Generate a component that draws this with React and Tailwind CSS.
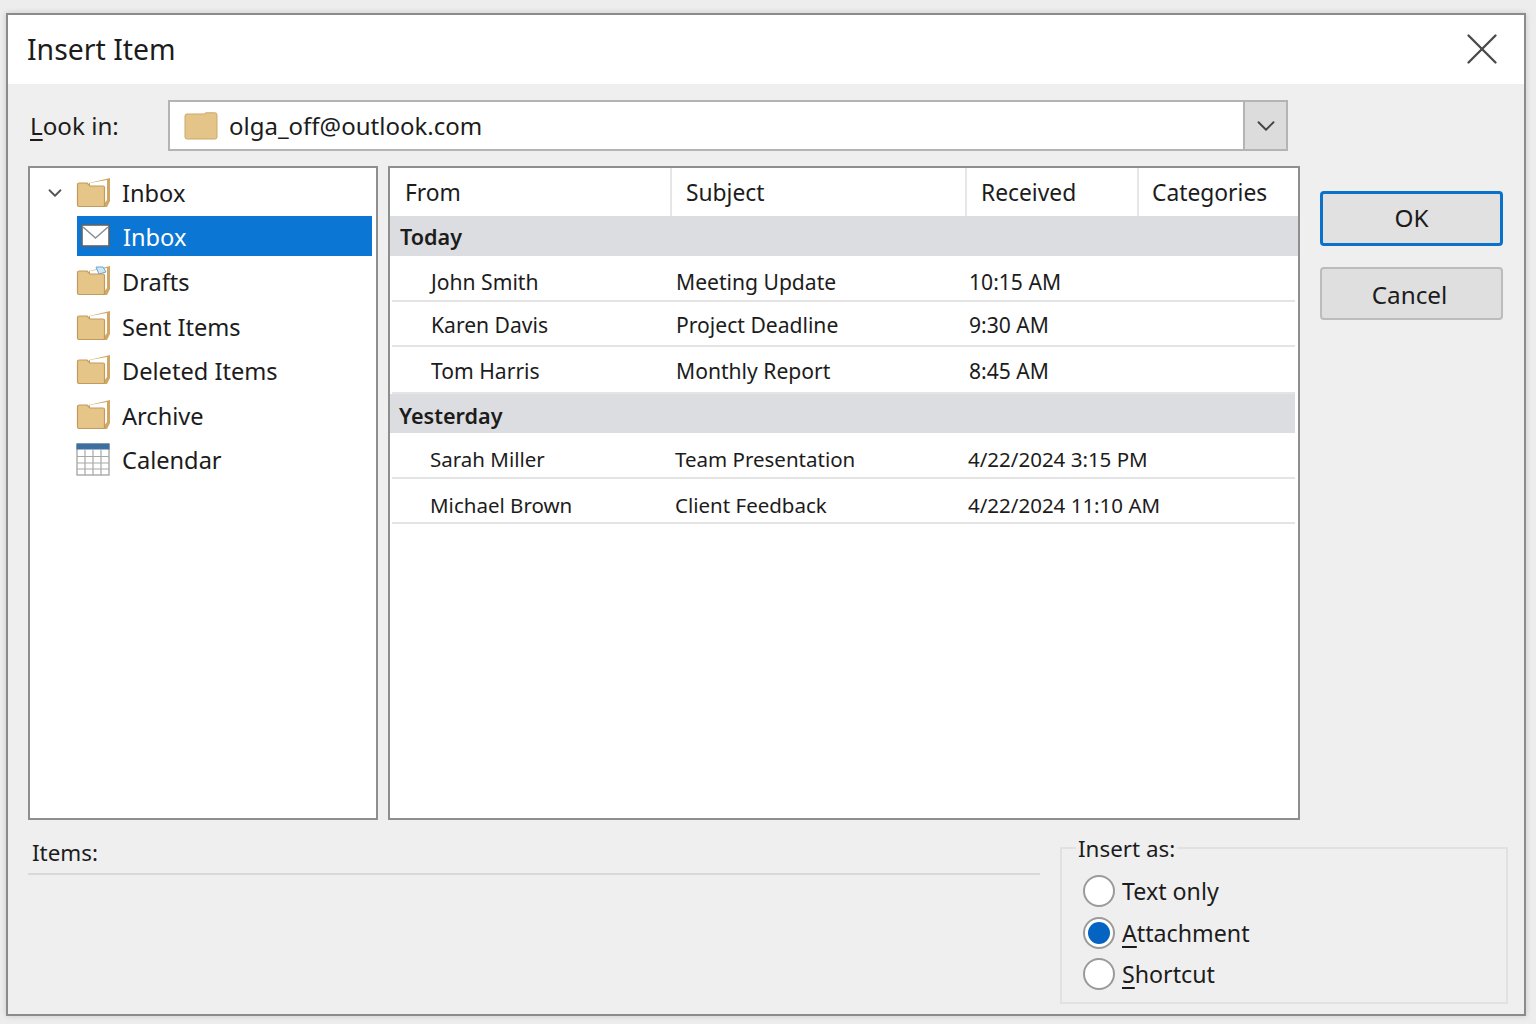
import React from "react";
import { X, ChevronDown } from "lucide-react";

const FolderIcon = ({ paper = true, note = false }) => (
  <svg width="36" height="32" viewBox="0 0 36 32" className="shrink-0">
    {paper && (
      <>
        <path d="M13 6 L34 1 V24 L31 30 H13 Z" fill="#cfa865" />
        <path d="M14 6 L31 3 V23 L28 27 H14 Z" fill="#ffffff" />
      </>
    )}
    {note && <path d="M20 2 L27 2 L30 7 L23 9 Z" fill="#cfe6f5" stroke="#6aa6d6" strokeWidth="1" />}
    <path
      d="M1.5 8 Q1.5 6 3.5 6 H11 L14 9 H27 Q28.5 9 28.5 10.5 V28.5 Q28.5 29.5 27 29.5 H3 Q1.5 29.5 1.5 28 Z"
      fill="#e6c588"
      stroke="#c39a5c"
      strokeWidth="1.2"
    />
  </svg>
);

const ClosedFolder = () => (
  <svg width="34" height="28" viewBox="0 0 34 28" className="shrink-0">
    <path
      d="M1 4 Q1 2 3 2 H20 L22 0.8 H31 Q33 0.8 33 3 V25 Q33 27 31 27 H3 Q1 27 1 25 Z"
      fill="#e4c488"
      stroke="#cba969"
      strokeWidth="1"
    />
  </svg>
);

const MailIcon = () => (
  <svg width="30" height="24" viewBox="0 0 30 24" className="shrink-0">
    <rect x="1" y="1" width="27" height="21" fill="#ffffff" stroke="#5f6468" strokeWidth="1.6" />
    <path d="M2 3 L14.5 14 L27 3" fill="none" stroke="#8b8f93" strokeWidth="1.5" />
  </svg>
);

const CalendarIcon = () => (
  <svg width="34" height="33" viewBox="0 0 34 33" className="shrink-0">
    <rect x="1" y="1" width="32" height="31" fill="#ffffff" stroke="#9a9a9a" strokeWidth="1.2" />
    <rect x="0.5" y="0.5" width="33" height="6" fill="#3f6f9f" />
    <path
      d="M9 7 V32 M17 7 V32 M25 7 V32 M1 13.5 H33 M1 20 H33 M1 26 H33"
      fill="none"
      stroke="#a8a8a8"
      strokeWidth="1.2"
    />
  </svg>
);

const treeItems = [
  { label: "Drafts", icon: <FolderIcon note /> },
  { label: "Sent Items", icon: <FolderIcon /> },
  { label: "Deleted Items", icon: <FolderIcon /> },
  { label: "Archive", icon: <FolderIcon /> },
  { label: "Calendar", icon: <CalendarIcon /> },
];

const groups = [
  {
    name: "Today",
    band: "h-[40px] pl-[10px] pt-[1px]",
    text: "text-[21.1px]",
    fromWidth: "w-[284px] pl-[39px]",
    rows: [
      ["John Smith", "Meeting Update", "10:15 AM", "h-[46px] pt-[8px]"],
      ["Karen Davis", "Project Deadline", "9:30 AM", "h-[45px] pt-[3px]"],
      ["Tom Harris", "Monthly Report", "8:45 AM", "h-[47px] pt-[3px]"],
    ],
  },
  {
    name: "Yesterday",
    band: "h-[39px] pl-[9px] mr-[3px] pt-[4px]",
    text: "text-[20.5px]",
    fromWidth: "w-[283px] pl-[38px]",
    rows: [
      ["Sarah Miller", "Team Presentation", "4/22/2024 3:15 PM", "h-[46px] pt-[8px]"],
      ["Michael Brown", "Client Feedback", "4/22/2024 11:10 AM", "h-[45px] pt-[8px]"],
    ],
  },
];

const Radio = ({ checked, children }) => (
  <div className="flex items-center gap-[7px] h-[32px]">
    <span className="w-[32px] h-[32px] rounded-full bg-white border-2 border-[#9a9a9a] flex items-center justify-center shrink-0">
      {checked && <span className="w-[22px] h-[22px] rounded-full bg-[#0563c1]" />}
    </span>
    <span>{children}</span>
  </div>
);

export default function App() {
  return (
    <div
      className="w-[1536px] h-[1024px] bg-[#ededed] pt-[13px] pl-[6px] overflow-hidden text-[#1c1c1c] text-[23.6px] leading-[36px]"
      style={{ fontFamily: '"Noto Sans", "Open Sans", sans-serif' }}
    >
      <div className="w-[1520px] h-[1003px] border-2 border-[#8b8b8b] bg-[#efefef] flex flex-col shadow-[0_0_6px_rgba(0,0,0,0.15)]">
        <div className="h-[69px] bg-white flex items-center justify-between pl-[19px] pr-[15px] shrink-0">
          <span className="text-[28.4px] pb-[2px]">Insert Item</span>
          <X size={54} strokeWidth={1.05} className="text-[#4a4a4a] -mt-[2px]" />
        </div>

        <div className="px-[20px] flex flex-col">
          <div className="flex items-center mt-[16px] h-[51px]">
            <span className="w-[140px] pl-[2px] shrink-0 text-[24.2px]">
              <span className="underline underline-offset-4">L</span>ook in:
            </span>
            <div className="w-[1120px] h-[51px] bg-white border-2 border-[#b4b4b4] flex items-center">
              <div className="flex-1 flex items-center pl-[14px] gap-[11px] text-[24px]">
                <ClosedFolder />
                <span>olga_off@outlook.com</span>
              </div>
              <div className="w-[43px] h-full bg-[#dcdcdc] border-l-2 border-[#b4b4b4] flex items-center justify-center">
                <ChevronDown size={30} strokeWidth={1.5} className="text-[#444444]" />
              </div>
            </div>
          </div>

          <div className="flex mt-[15px] h-[654px]">
            <div className="w-[350px] h-full bg-white border-2 border-[#8e8e8e] pt-[3px] shrink-0">
              <div className="flex items-center h-[44px] pl-[4px]">
                <ChevronDown size={22} strokeWidth={2} className="text-[#555555] w-[42px]" />
                <FolderIcon />
                <span className="ml-[10px]">Inbox</span>
              </div>
              <div className="flex items-center h-[40px] ml-[47px] mr-[4px] mt-[1px] mb-[3px] bg-[#0b76d4] text-white pl-[4px]">
                <MailIcon />
                <span className="ml-[12px] pt-[2px]">Inbox</span>
              </div>
              {treeItems.map((item) => (
                <div key={item.label} className="flex items-center h-[44.5px] pl-[46px]">
                  <span className="w-[46px] flex shrink-0">{item.icon}</span>
                  <span className="pt-[2px]">{item.label}</span>
                </div>
              ))}
            </div>

            <div className="w-[912px] h-full ml-[10px] bg-white border-2 border-[#8e8e8e] shrink-0">
              <div className="flex h-[48px] items-center text-[22.8px]">
                <span className="w-[280px] pl-[15px] pt-[2px]">From</span>
                <span className="w-[295px] pl-[14px] pt-[2px] h-full flex items-center border-l-2 border-[#e6e6e6]">Subject</span>
                <span className="w-[172px] pl-[14px] pt-[2px] h-full flex items-center border-l-2 border-[#e6e6e6]">Received</span>
                <span className="flex-1 pl-[13px] pt-[2px] h-full flex items-center border-l-2 border-[#e6e6e6]">Categories</span>
              </div>
              {groups.map((group) => (
                <div key={group.name}>
                  <div className={`${group.band} bg-[#dcdde0] flex items-center font-semibold text-[21.6px]`}>
                    {group.name}
                  </div>
                  {group.rows.map(([from, subject, received, height]) => (
                    <div
                      key={from}
                      className={`${height} ${group.text} flex items-center ml-[2px] mr-[3px] border-b-2 border-[#e4e4e4]`}
                    >
                      <span className={group.fromWidth}>{from}</span>
                      <span className="w-[293px]">{subject}</span>
                      <span>{received}</span>
                    </div>
                  ))}
                </div>
              ))}
            </div>

            <div className="w-[183px] ml-[20px] pt-[25px] flex flex-col gap-[21px] shrink-0">
              <div className="h-[55px] pb-[1px] bg-[#e1e1e1] border-[3px] border-[#0b72c9] rounded-[4px] flex items-center justify-center text-[24.3px]">
                OK
              </div>
              <div className="h-[53px] pt-[2px] bg-[#dfdfdf] border-2 border-[#bcbcbc] rounded-[4px] flex items-center justify-center text-[24.3px] pr-[4px]">
                Cancel
              </div>
            </div>
          </div>

          <div className="flex">
            <div className="w-[1012px] h-[55px] mr-[20px] border-b-2 border-[#d9d9d9] flex items-end pb-[2px] pl-[4px] shrink-0 text-[22.4px]">
              Items:
            </div>
            <fieldset className="w-[448px] h-[174px] mt-[10px] border-2 border-[#e1e1e1] pl-[21px] shrink-0">
              <legend className="-ml-[7px] px-[2px] text-[22.4px]">
                <span className="relative top-[1px]">Insert as:</span>
              </legend>
              <div className="flex flex-col gap-[9.5px] pt-[9px] text-[23.2px]">
                <Radio>Text only</Radio>
                <Radio checked>
                  <span className="underline underline-offset-4">A</span>ttachment
                </Radio>
                <Radio>
                  <span className="underline underline-offset-4">S</span>hortcut
                </Radio>
              </div>
            </fieldset>
          </div>
        </div>
      </div>
    </div>
  );
}
